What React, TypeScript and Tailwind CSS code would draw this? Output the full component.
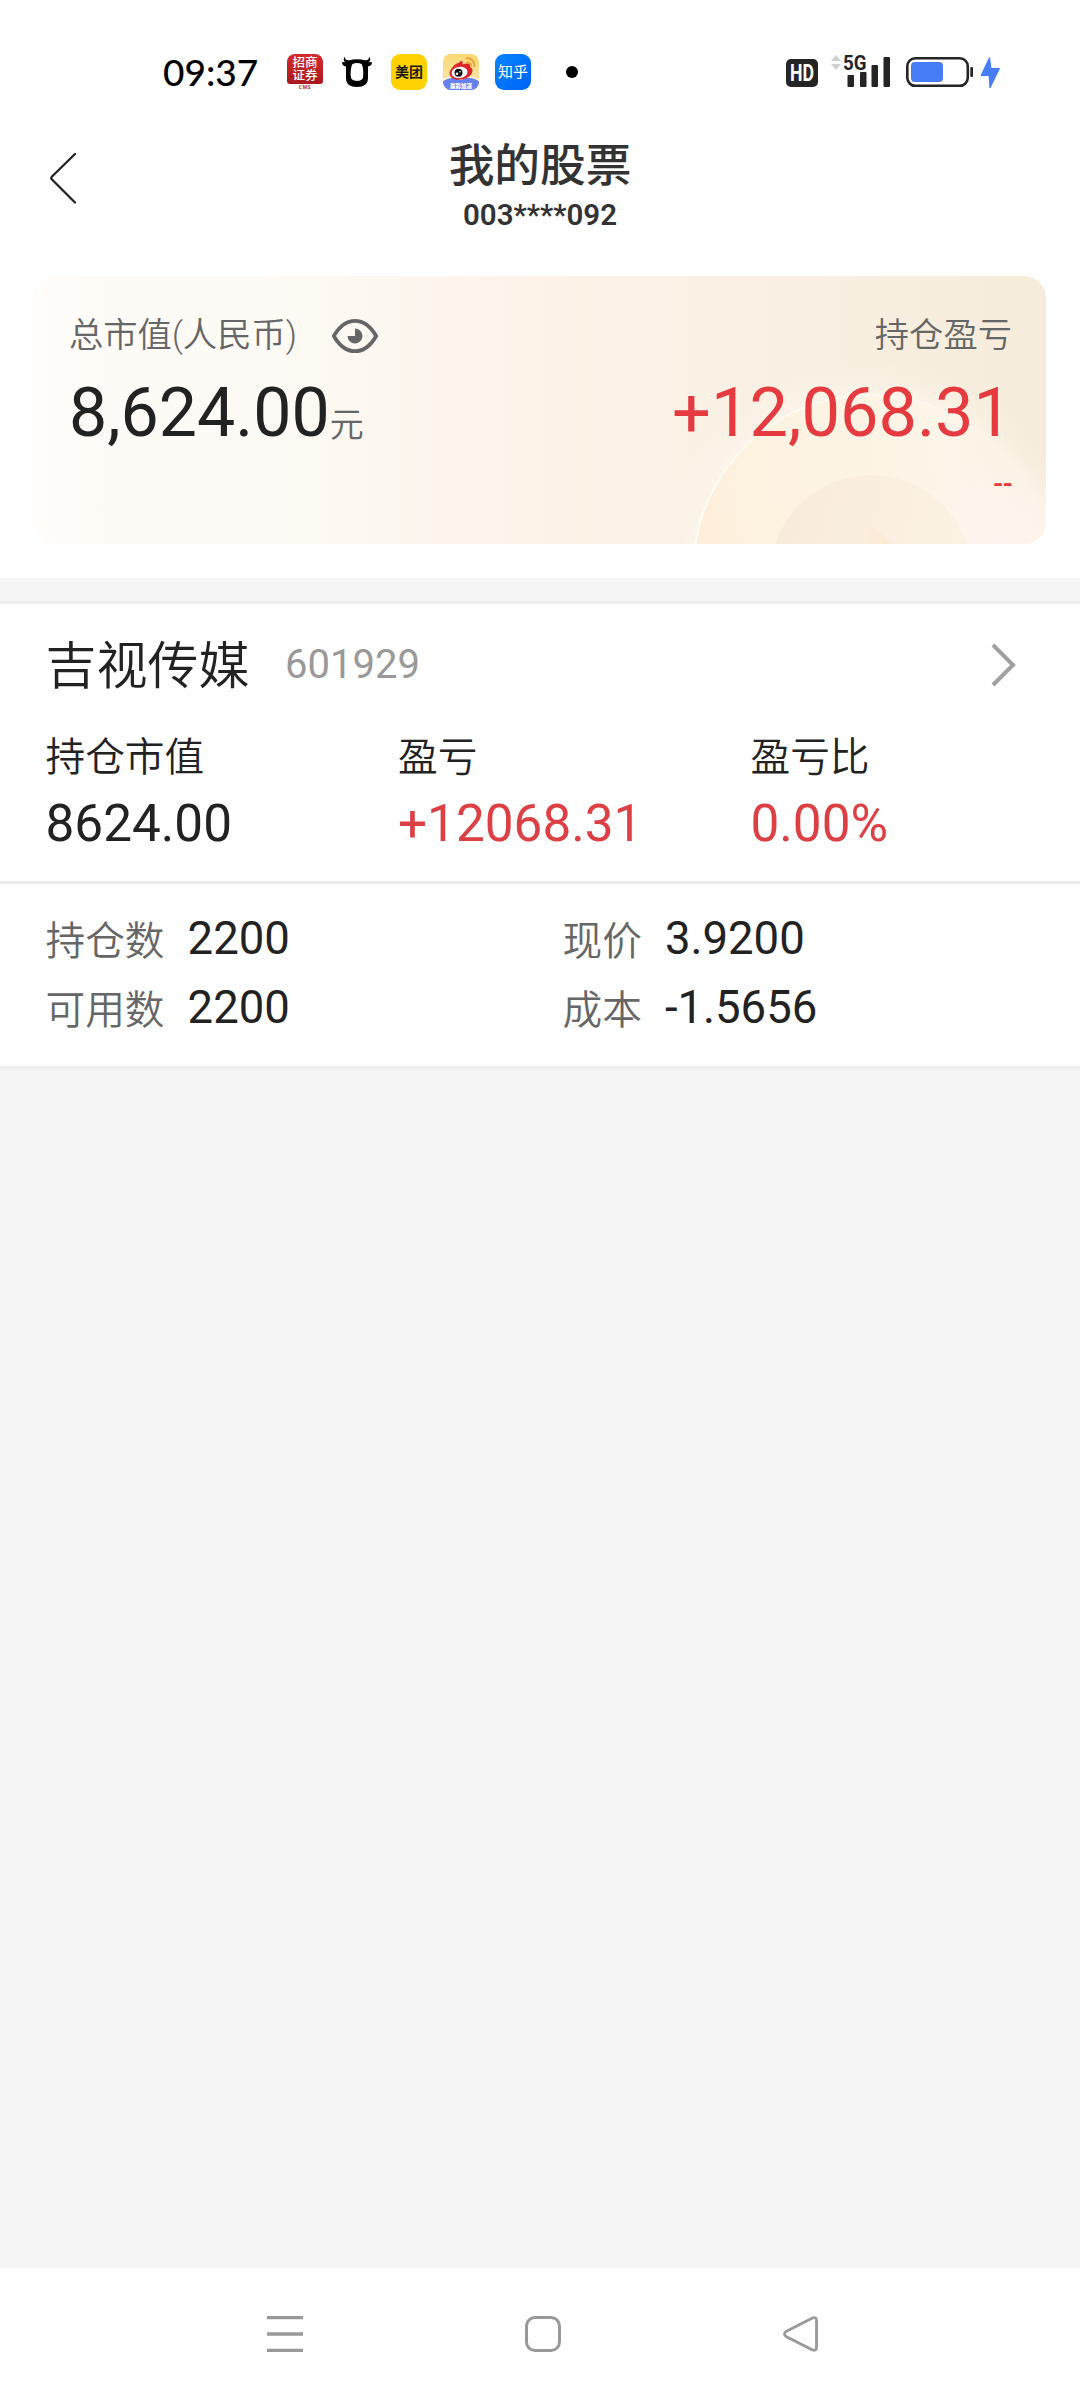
import { ReactNode } from "react";

const positions = [
  {
    name: "吉视传媒",
    code: "601929",
    marketValue: "8624.00",
    profit: "+12068.31",
    profitRatio: "0.00%",
    held: "2200",
    available: "2200",
    price: "3.9200",
    cost: "-1.5656",
  },
];

function CmsIcon() {
  return (
    <div className="flex h-9 w-9 flex-col items-center">
      <div className="flex h-[30px] w-9 flex-col items-center justify-center rounded-t-[8px] rounded-b-[3px] bg-gradient-to-b from-[#d42a2e] to-[#a91a1f] text-[12.5px] leading-[13px] font-medium text-white">
        <span>招商</span>
        <span>证券</span>
      </div>
      <span className="text-[5px] leading-[6px] font-black tracking-[0.5px] text-[#b8474a]">CMS</span>
    </div>
  );
}

function BullIcon() {
  return (
    <svg width="30" height="32" viewBox="0 0 30 32">
      <path
        d="M3 0.5C2.6 3 4 4.5 7 4.3C12 2.8 18 2.8 23 4.3C26 4.5 27.4 3 27 0.5C29 3 28.5 5 27 6L30 6.3C30 9 28.5 10.3 26 10.5V22C26 28 22 31 15 31C8 31 4 28 4 22V10.5C1.5 10.3 0 9 0 6.3L3 6C1.5 5 1 3 3 0.5Z"
        fill="#000"
      />
      <path d="M10.5 8C13 6.6 17 6.6 19.5 8C21 10 21.8 17 21 21.5C20.5 26 9.5 26 9 21.5C8.2 17 9 10 10.5 8Z" fill="#fff" />
    </svg>
  );
}

function WeiboIcon() {
  return (
    <div className="relative h-9 w-9 overflow-hidden rounded-[8px] bg-gradient-to-b from-[#fad873] to-[#fbe9b4]">
      <svg className="absolute inset-0" width="36" height="36" viewBox="0 0 36 36">
        <path d="M0 27Q9 21 18 26Q27 21 36 27V36H0Z" fill="#6680ee" />
        <path d="M0 27Q9 21 18 26Q27 21 36 27V25Q27 20 18 24Q9 20 0 25Z" fill="#fff4d8" />
        <path
          d="M16 9C17.5 6 20.5 6.5 19.5 10.5C23 9 28 8.5 27 13C31 14.5 30 20 25.5 23C19 27.5 7.5 26.5 6.5 20C6 15.5 13 8.5 16 9Z"
          fill="#e0242b"
        />
        <ellipse cx="16.5" cy="18.5" rx="8" ry="5.6" fill="#fff" transform="rotate(-8 16.5 18.5)" />
        <circle cx="15.5" cy="18.7" r="4" fill="#111" />
        <circle cx="14" cy="19.8" r="1.3" fill="#fff" />
        <circle cx="17" cy="17.8" r="0.8" fill="#fff" />
        <path d="M23 4.5C28.5 3.5 32.5 8 31 13M23.5 8.5C26.5 8 28.5 10 27.8 12.5" fill="none" stroke="#f0a13a" strokeWidth="2" />
      </svg>
      <span className="absolute inset-x-0 bottom-0 text-center text-[5.5px] leading-[8px] font-black text-white">赢彩加速</span>
    </div>
  );
}

function StatusBar() {
  return (
    <div className="flex h-[120px] items-center bg-white pt-6 pr-[79px] pl-[163px]">
      <span className="mb-[2px] w-[124px] font-[Lato] text-[37px] leading-none font-medium text-black">09:37</span>
      <CmsIcon />
      <div className="ml-[19px]">
        <BullIcon />
      </div>
      <div className="ml-[19px] flex h-9 w-9 items-center justify-center rounded-[9px] bg-[#ffd100] text-[14px] leading-none font-bold text-[#1c1a10]">
        美团
      </div>
      <div className="ml-4">
        <WeiboIcon />
      </div>
      <div className="ml-4 flex h-9 w-9 items-center justify-center rounded-[9px] bg-gradient-to-br from-[#0a84ff] to-[#0062f5] pt-px text-[15px] leading-none font-normal text-white">
        知乎
      </div>
      <div className="ml-[35px] h-3 w-3 rounded-full bg-black" />

      <div className="ml-auto flex items-center">
        <svg width="32" height="52" viewBox="786 46 32 52">
          <rect x="786" y="59" width="32" height="28" rx="5" fill="#252525" />
          <text x="790" y="81" fontSize="23" fontWeight="700" textLength="24" lengthAdjust="spacingAndGlyphs" fill="#fff">
            HD
          </text>
        </svg>
        <svg className="ml-3" width="62" height="52" viewBox="830 46 62 52">
          <path d="M831 61L836 55L841 61ZM831 64H841L836 70Z" fill="#d0d0d0" />
          <text x="843" y="70" fontSize="21" fontWeight="700" textLength="23.5" lengthAdjust="spacingAndGlyphs" fill="#252525">
            5G
          </text>
          <g fill="#252525">
            <rect x="847.5" y="75" width="6.5" height="12" rx="1" />
            <rect x="860" y="72" width="6.5" height="15" rx="1" />
            <rect x="871.5" y="65" width="6.5" height="22" rx="1" />
            <rect x="883.5" y="57" width="6.5" height="30" rx="1" />
          </g>
        </svg>
        <svg className="ml-3" width="97" height="36" viewBox="904 54 97 36">
          <rect x="907.3" y="58.3" width="60.5" height="27.5" rx="8" fill="none" stroke="#252525" strokeWidth="2.6" />
          <rect x="911" y="62" width="32" height="20" rx="4" fill="#467df7" />
          <rect x="970.3" y="67" width="2.7" height="10" rx="1" fill="#252525" />
          <path d="M989.5 57.5L981 75.5H989L990 88L999.5 68.5H991Z" fill="#467df7" stroke="#467df7" strokeLinejoin="round" />
        </svg>
      </div>
    </div>
  );
}

function Header() {
  return (
    <div className="flex h-[156px] items-start bg-white text-[#333]">
      <div className="w-[160px] pt-8 pl-[49px]">
        <svg width="29" height="53" viewBox="0 0 29 53" fill="none" stroke="#222" strokeWidth="2.3" strokeLinecap="round" strokeLinejoin="round">
          <path d="M26 2L3 24.5Q1.5 26 3 27.5L26 50.5" />
        </svg>
      </div>
      <div className="flex flex-1 flex-col items-center pt-[17px]">
        <h1 className="text-[45.7px] leading-[60px] font-medium">我的股票</h1>
        <p className="text-[29.5px] leading-9 font-semibold">003****092</p>
      </div>
      <div className="w-[160px]" />
    </div>
  );
}

function EyeIcon() {
  return (
    <svg className="mt-[2px]" width="48" height="36" viewBox="0 0 48 36" fill="none">
      <path
        d="M2.8 18C8 9 15.5 2.8 24 2.8S40 9 45.2 18C40 27 32.5 33.2 24 33.2S8 27 2.8 18Z"
        stroke="#666"
        strokeWidth="3.8"
        strokeLinejoin="round"
      />
      <path d="M24 18V10.5A7.5 7.5 0 1 1 16.5 18Z" fill="#666" />
    </svg>
  );
}

// Coin-like decoration clipped by the bottom edge of the card
function CardBackdrop() {
  return (
    <svg className="absolute inset-0" width="1012" height="268" viewBox="34 276 1012 268">
      <defs>
        <linearGradient id="ring" x1="695" y1="540" x2="1046" y2="480" gradientUnits="userSpaceOnUse">
          <stop offset="0" stopColor="#fdeedb" />
          <stop offset="0.2" stopColor="#fdf2e0" />
          <stop offset="0.75" stopColor="#fdf5e9" />
          <stop offset="1" stopColor="#fbf1e3" />
        </linearGradient>
        <linearGradient id="ringEdge" x1="695" y1="0" x2="1020" y2="0" gradientUnits="userSpaceOnUse">
          <stop offset="0" stopColor="#fffcf3" />
          <stop offset="0.6" stopColor="#fffaf0" />
          <stop offset="1" stopColor="#fffaf0" stopOpacity="0" />
        </linearGradient>
        <linearGradient id="core" x1="780" y1="500" x2="970" y2="544" gradientUnits="userSpaceOnUse">
          <stop offset="0" stopColor="#f9ebdb" />
          <stop offset="1" stopColor="#fbf2e4" />
        </linearGradient>
        <radialGradient id="halo" cx="870" cy="572" r="212" gradientUnits="userSpaceOnUse">
          <stop offset="0.83" stopColor="#fcf5ea" stopOpacity="0.8" />
          <stop offset="0.91" stopColor="#fcf5ea" stopOpacity="0.3" />
          <stop offset="1" stopColor="#fcf5ea" stopOpacity="0" />
        </radialGradient>
        <radialGradient id="corner" cx="1000" cy="545" r="90" gradientUnits="userSpaceOnUse">
          <stop offset="0" stopColor="#fef5f0" />
          <stop offset="1" stopColor="#fef5f0" stopOpacity="0" />
        </radialGradient>
        <linearGradient id="peak" x1="850" y1="0" x2="892" y2="0" gradientUnits="userSpaceOnUse">
          <stop offset="0" stopColor="#fbf0e0" />
          <stop offset="1" stopColor="#fbe9d4" />
        </linearGradient>
      </defs>
      <circle cx="870" cy="572" r="212" fill="url(#halo)" />
      <circle cx="870" cy="572" r="177" fill="url(#ring)" stroke="url(#ringEdge)" strokeWidth="2" />
      <circle cx="1000" cy="545" r="90" fill="url(#corner)" />
      <circle cx="871" cy="576" r="101" fill="url(#core)" />
      <path d="M850 544L867 529Q871 525 875 528L892 544Z" fill="url(#peak)" />
    </svg>
  );
}

function SummaryCard() {
  return (
    <div className="bg-white px-[34px] pb-[34px]">
      <div className="relative h-[268px] overflow-hidden rounded-[22px] bg-[linear-gradient(90deg,#fffcf9_0%,#fefaf5_22%,#fcf7f0_35%,#fef5ef_40%,#fdf3e8_50%,#faf2e6_60%,#f9efe2_78%,#f6ecdb_100%)]">
        <CardBackdrop />
        <div className="relative flex justify-between pt-[39px] pr-[34px] pl-[35px]">
          <div>
            <div className="flex h-10 items-center gap-[34px] text-[34.3px] leading-10 text-[#666]">
              <span className="font-[350]">总市值(人民币)</span>
              <EyeIcon />
            </div>
            <div className="mt-[18px] text-[68px] leading-[80px] text-[#222]">
              8,624.00<span className="relative top-px text-[34px] font-[350] text-[#666]">元</span>
            </div>
          </div>
          <div className="flex flex-col items-end text-[#e53b40]">
            <span className="text-[34.3px] leading-10 font-[350] text-[#666]">持仓盈亏</span>
            <span className="mt-[18px] text-[68.5px] leading-[80px]">+12,068.31</span>
            <span className="mt-[11px] text-[29px] leading-10 font-medium tracking-[-0.5px]">--</span>
          </div>
        </div>
      </div>
    </div>
  );
}

function Metric({ label, value, red }: { label: string; value: string; red?: boolean }) {
  return (
    <div className="w-[352.5px] shrink-0">
      <p className="text-[39.7px] leading-[46px] font-[350] text-[#222]">{label}</p>
      <p className={red ? "mt-[13px] text-[51.3px] leading-[60px] text-[#dd4044]" : "mt-[13px] text-[51.3px] leading-[60px] text-[#222]"}>{value}</p>
    </div>
  );
}

function Detail({ label, children }: { label: string; children: ReactNode }) {
  return (
    <div className="flex h-[69px] items-center">
      <span className="mt-[6px] mr-[23px] text-[39.7px] leading-[46px] font-[350] text-[#666]">{label}</span>
      <span className="text-[45.5px] leading-[54px] text-[#222]">{children}</span>
    </div>
  );
}

function PositionItem({ item }: { item: (typeof positions)[number] }) {
  return (
    <div className="border-y-3 border-[#ededed] bg-white">
      <div className="h-[277px] pt-[33px] pl-[45.5px]">
        <div className="flex h-[59px] items-center pr-[63px]">
          <span className="text-[51px] leading-[60px] font-[350] text-[#222]">{item.name}</span>
          <span className="mb-1 ml-[35.5px] text-[40px] leading-[58px] text-[#999]">{item.code}</span>
          <svg className="mb-1 ml-auto" width="26" height="46" viewBox="0 0 26 46" fill="none" stroke="#a0a0a0" strokeWidth="4">
            <path d="M2 3L22 23L2 43" />
          </svg>
        </div>
        <div className="mt-[39px] flex">
          <Metric label="持仓市值" value={item.marketValue} />
          <Metric label="盈亏" value={item.profit} red />
          <Metric label="盈亏比" value={item.profitRatio} red />
        </div>
      </div>
      <div className="flex border-t-3 border-[#ededed] pt-5 pb-6 pl-[45.5px]">
        <div className="w-[517px]">
          <Detail label="持仓数">{item.held}</Detail>
          <Detail label="可用数">{item.available}</Detail>
        </div>
        <div>
          <Detail label="现价">{item.price}</Detail>
          <Detail label="成本">{item.cost}</Detail>
        </div>
      </div>
    </div>
  );
}

function NavigationBar() {
  return (
    <div className="flex h-[132px] bg-white pt-[45px] pl-[264px]">
      <div className="flex gap-[216px]">
        <svg width="42" height="42" viewBox="0 0 42 42" stroke="#999" strokeWidth="3.3">
          <path d="M3 4.7H39M3 21H39M3 37.3H39" />
        </svg>
        <svg width="42" height="42" viewBox="0 0 42 42" fill="none" stroke="#999" strokeWidth="3">
          <rect x="4.5" y="4.5" width="33" height="33" rx="8.5" />
        </svg>
        <svg width="42" height="42" viewBox="0 0 42 42" fill="none" stroke="#999" strokeWidth="2.8" strokeLinejoin="round">
          <path d="M6 18.5L32.5 5Q36.5 3.5 36.5 7.5V34.5Q36.5 38 32.5 37L6 23.5Q3 21 6 18.5Z" />
        </svg>
      </div>
    </div>
  );
}

export default function App() {
  return (
    <div className="flex h-[2400px] w-[1080px] flex-col overflow-hidden bg-[#f5f5f5] font-[Roboto,'Noto_Sans_CJK_SC',sans-serif]">
      <StatusBar />
      <Header />
      <SummaryCard />
      <main className="flex-1 pt-[23px]">
        {positions.map((item) => (
          <PositionItem key={item.code} item={item} />
        ))}
      </main>
      <NavigationBar />
    </div>
  );
}
